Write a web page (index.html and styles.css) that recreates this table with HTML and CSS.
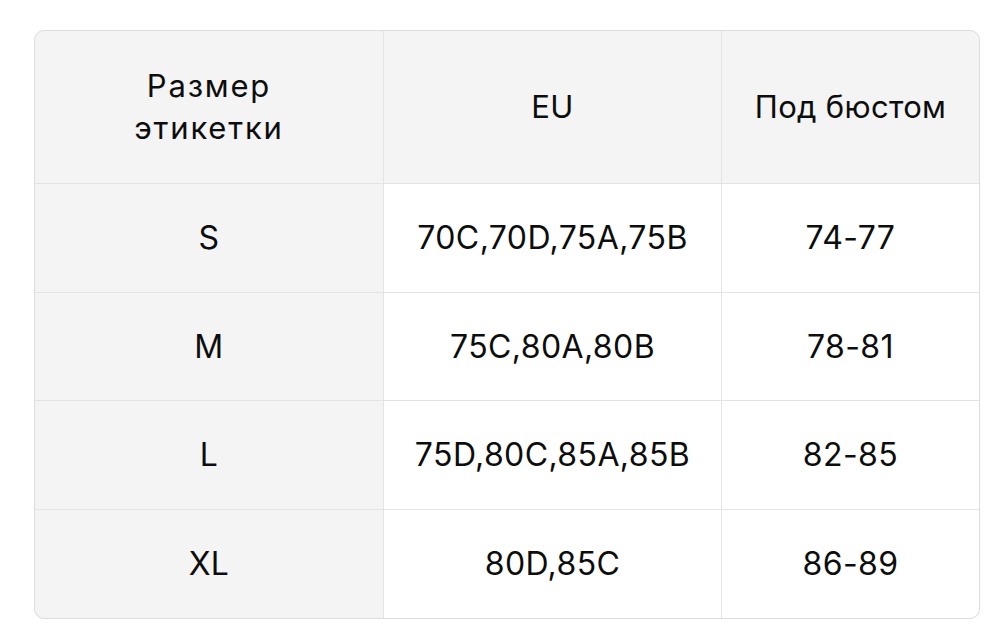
FILE: index.html
```html
<!DOCTYPE html>
<html lang="ru">
<head>
<meta charset="utf-8">
<link rel="stylesheet" href="styles.css">
</head>
<body>
<div class="table">
  <div class="cell head first label"><span>Размер<br>этикетки</span></div>
  <div class="cell head">EU</div>
  <div class="cell head">Под бюстом</div>

  <div class="cell first">S</div>
  <div class="cell">70C,70D,75A,75B</div>
  <div class="cell">74-77</div>

  <div class="cell first">M</div>
  <div class="cell">75C,80A,80B</div>
  <div class="cell">78-81</div>

  <div class="cell first">L</div>
  <div class="cell">75D,80C,85A,85B</div>
  <div class="cell">82-85</div>

  <div class="cell first">XL</div>
  <div class="cell">80D,85C</div>
  <div class="cell">86-89</div>
</div>
</body>
</html>
```

FILE: styles.css
```css
html, body {
  margin: 0;
  padding: 0;
  background: #ffffff;
}
body {
  padding: 30px 0 0 34px;
  font-family: "Inter", "Liberation Sans", sans-serif;
  color: #0d0d0d;
}
.table {
  width: 944px;
  display: grid;
  grid-template-columns: 348px 337px 257px;
  grid-template-rows: 152px 108px 107px 108px 108px;
  gap: 1px;
  background: #e4e4e4;
  border: 1px solid #dcdcdc;
  border-radius: 10px;
  overflow: hidden;
}
.cell {
  display: flex;
  align-items: center;
  justify-content: center;
  text-align: center;
  background: #ffffff;
  font-size: 32px;
  letter-spacing: 0.4px;
  line-height: 42px;
}
.head, .first {
  background: #f4f4f4;
}
.head {
  font-size: 31px;
  letter-spacing: 0.3px;
}
.label {
  letter-spacing: 1.8px;
}
```
